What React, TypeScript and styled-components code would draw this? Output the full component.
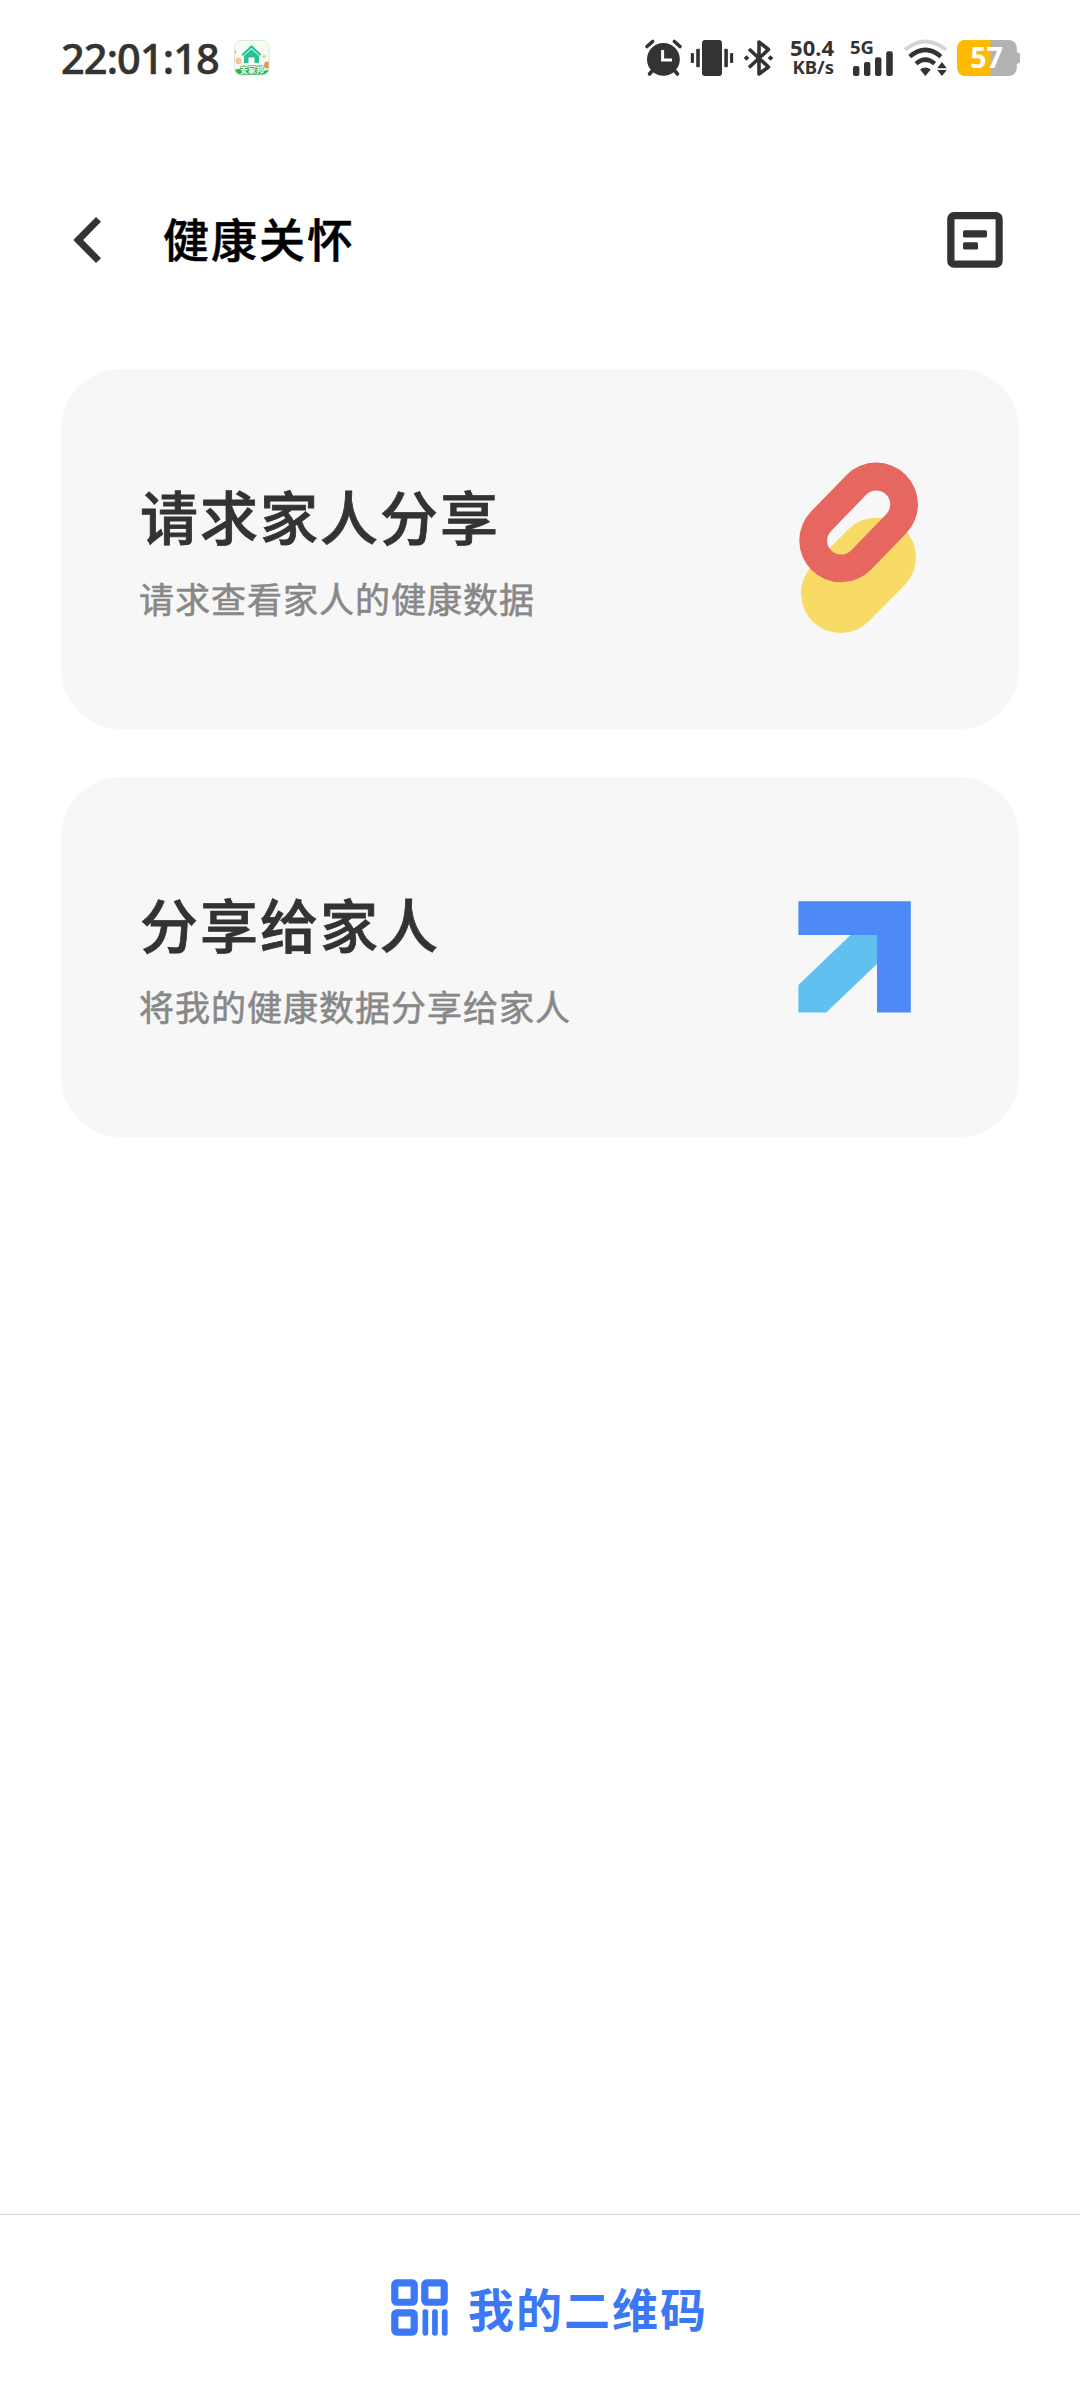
import React from "react";
import styled, { createGlobalStyle } from "styled-components";

const INK = "#333333";
const BLUE = "#3a78f5";

const GlobalStyle = createGlobalStyle`
  body { margin: 0; background: #ffffff; }
  * { box-sizing: border-box; }
`;

const Screen = styled.div`
  display: flex;
  flex-direction: column;
  width: 1080px;
  height: 2400px;
  overflow: hidden;
  background: #ffffff;
  font-family: "Noto Sans", "Noto Sans CJK SC", sans-serif;
`;

const Icon = styled.svg<{ $ml?: number }>`
  display: block;
  flex: none;
  overflow: visible;
  margin-left: ${(p) => p.$ml ?? 0}px;
`;

const StatusBar = styled.header`
  display: flex;
  align-items: center;
  height: 116px;
  padding: 0 59px 0 60px;
  color: ${INK};
`;

const Clock = styled.time`
  width: 174px;
  padding: 0 0 1px 1px;
  font-size: 41.5px;
  line-height: 60px;
  font-weight: 500;
  letter-spacing: -0.9px;
  white-space: nowrap;
  -webkit-text-stroke: 0.6px ${INK};
`;

const StatusIcons = styled.div`
  display: flex;
  align-items: center;
  margin-left: auto;
`;

const NetSpeed = styled.div`
  display: flex;
  flex-direction: column;
  align-items: flex-end;
  width: 47px;
  margin-left: 13px;
  margin-right: 1px;
  padding-bottom: 2px;
  font-weight: 700;
  white-space: nowrap;
`;

const SpeedValue = styled.span`
  font-size: 22px;
  line-height: 19px;
`;

const SpeedUnit = styled.span`
  font-size: 18.5px;
  line-height: 20px;
`;

const NavBar = styled.nav`
  display: flex;
  align-items: center;
  height: 248px;
  padding: 0 77px 0 73px;
`;

const PageTitle = styled.h1`
  flex: 1;
  margin: 0 0 2px 61px;
  font-size: 46px;
  line-height: 64px;
  font-weight: 500;
  letter-spacing: 2px;
  color: #000000;
  -webkit-text-stroke: 0.5px #000000;
`;

const CardList = styled.main`
  display: flex;
  flex: 1;
  flex-direction: column;
  gap: 48px;
  padding: 5px 61px 0;
`;

const Card = styled.section`
  display: flex;
  align-items: center;
  justify-content: space-between;
  height: 360px;
  padding: 0 98px 0 78px;
  border-radius: 60px;
  background: #f7f7f7;
`;

const CardText = styled.div`
  display: flex;
  flex-direction: column;
  gap: 17px;
  padding-top: 5px;
`;

const CardTitle = styled.h2`
  margin: 0 0 0 1px;
  font-size: 58px;
  line-height: 80px;
  font-weight: 500;
  letter-spacing: 2px;
  color: ${INK};
  -webkit-text-stroke: 0.8px ${INK};
`;

const CardHint = styled.p`
  margin: 0;
  font-size: 35px;
  line-height: 50px;
  font-weight: 400;
  letter-spacing: 1px;
  color: #888888;
  -webkit-text-stroke: 0.6px #888888;
`;

const BottomBar = styled.footer`
  display: flex;
  align-items: center;
  justify-content: center;
  gap: 20px;
  height: 186px;
  padding-left: 19px;
  border-top: 1px solid #d8d8d8;
`;

const BottomLabel = styled.span`
  padding-top: 2px;
  font-size: 46px;
  line-height: 64px;
  font-weight: 700;
  letter-spacing: 2px;
  color: ${BLUE};
`;

const AppBadge = () => (
  <Icon width="36" height="36" viewBox="0 0 36 36">
    <defs>
      <clipPath id="badge"><rect x="0.5" y="0.5" width="34.5" height="34.5" rx="7" /></clipPath>
    </defs>
    <g clipPath="url(#badge)">
      <rect width="36" height="36" fill="#f6fbf3" />
      <circle cx="4.5" cy="21" r="3.2" fill="#f8c493" />
      <circle cx="30" cy="16.5" r="1.8" fill="#f9c9a0" />
      <circle cx="33.5" cy="25" r="3.4" fill="#f0914a" />
      <circle cx="1" cy="12" r="1.4" fill="#f4a77b" />
      <path d="M0 30 Q8 27 18 30 T36 29 V36 H0Z" fill="#2fb653" />
      <path d="M17.5 5 L27.5 14.5 L26 16 L17.5 8 L9 16 L7.5 14.5Z" fill="#2dbf94" />
      <path d="M17.5 9.3 L25 16 V23 H20.5 V17.5 H14.5 V23 H10 V16Z" fill="#2dbf94" />
      <text x="18" y="33" textAnchor="middle" fontSize="8" fontWeight="700" fill="#ffffff" stroke="#2fa84f" strokeWidth="1.2" paintOrder="stroke" fontFamily="Noto Sans CJK SC, sans-serif">安家邦</text>
    </g>
    <rect x="0.5" y="0.5" width="34.5" height="34.5" rx="7" fill="none" stroke="#cfe3cc" strokeWidth="0.8" />
  </Icon>
);

const AlarmIcon = () => (
  <Icon width="37" height="38" viewBox="645 39 37 38">
    <circle cx="663.4" cy="59.3" r="16.4" fill={INK} />
    <path d="M647 46.5 L652.6 41.5 M680 46.5 L674.4 41.5" stroke={INK} strokeWidth="3.6" strokeLinecap="round" />
    <path d="M653 70 L649.5 74 M674 70 L677.5 74" stroke={INK} strokeWidth="3.6" strokeLinecap="round" />
    <path d="M662.6 50 V60 H672" fill="none" stroke="#ffffff" strokeWidth="3" />
  </Icon>
);

const VibrateIcon = () => (
  <Icon $ml={8} width="44" height="38" viewBox="690 39 44 38" fill={INK}>
    <rect x="702" y="40" width="20" height="36" rx="3.2" />
    <rect x="696.2" y="48.8" width="3.6" height="18.4" rx="1" />
    <rect x="724.3" y="48.8" width="3.6" height="18.4" rx="1" />
    <rect x="690.8" y="53" width="3.2" height="10" rx="1" />
    <rect x="730" y="53" width="3.2" height="10" rx="1" />
  </Icon>
);

const BluetoothIcon = () => (
  <Icon $ml={8} width="32" height="38" viewBox="742 39 32 38">
    <path d="M749 49 L768.5 67 L759 74 V42 L768.5 49.5 L749 67.5" fill="none" stroke={INK} strokeWidth="3.6" strokeLinejoin="round" />
    <path d="M746.5 55.2 L749.3 58 L746.5 60.8 L743.7 58Z M770.5 55.2 L773.3 58 L770.5 60.8 L767.7 58Z" fill={INK} />
  </Icon>
);

const SignalIcon = () => (
  <Icon $ml={15} width="44" height="38" viewBox="850 39 44 38" fill={INK}>
    <text x="850" y="53.7" fontSize="18.5" fontWeight="700">5G</text>
    <rect x="853" y="66" width="6.4" height="10" rx="2" />
    <rect x="864" y="62" width="6.4" height="14" rx="2" />
    <rect x="875" y="57.3" width="6.4" height="18.7" rx="2" />
    <rect x="886.2" y="51.3" width="6.6" height="24.7" rx="2.2" />
  </Icon>
);

const WifiIcon = () => (
  <Icon $ml={9} width="46" height="38" viewBox="903 39 46 38" fill="none">
    <path d="M905 49.8 Q925.3 33.2 946 49.8" stroke="#d4d4d4" strokeWidth="4" />
    <path d="M909.8 56.6 Q925.3 43.2 940.9 56.6" stroke={INK} strokeWidth="4.4" />
    <path d="M916 63.7 Q925.3 55.6 934.7 63.7" stroke={INK} strokeWidth="4.4" />
    <path d="M920 69.5 Q925.3 65.6 930.8 69.5 L925.4 76Z" fill={INK} />
    <path d="M942 62 L946.8 68.3 H937.2Z M942 76 L946.8 69.9 H937.2Z" fill={INK} />
  </Icon>
);

const BatteryIcon = () => (
  <Icon $ml={8} width="64" height="38" viewBox="957 39 64 38">
    <defs>
      <clipPath id="cell"><rect x="957.3" y="40" width="59.5" height="36" rx="8" /></clipPath>
    </defs>
    <path d="M1016 51.5 L1020 53.5 V62.5 L1016 64.5Z" fill="#b2b2b2" />
    <g clipPath="url(#cell)">
      <rect x="957" y="39" width="60" height="38" fill="#b2b2b2" />
      <rect x="957" y="39" width="33.5" height="38" fill="#ffba00" />
    </g>
    <text x="986.5" y="67.8" textAnchor="middle" fontSize="28.5" fontWeight="700" fill="#ffffff">57</text>
  </Icon>
);

const BackIcon = () => (
  <Icon width="29" height="48" viewBox="73 216 29 48">
    <path d="M98.5 219.4 L78.2 240 L98.5 260.6" fill="none" stroke={INK} strokeWidth="7" />
  </Icon>
);

const RecordsIcon = () => (
  <Icon width="56" height="56" viewBox="947 212 56 56" fill={INK}>
    <path fillRule="evenodd" d="M954 212 H996 A6.7 6.7 0 0 1 1002.7 218.7 V261 A6.7 6.7 0 0 1 996 267.7 H954 A6.7 6.7 0 0 1 947.2 261 V218.7 A6.7 6.7 0 0 1 954 212Z M954.5 219.3 V260.4 H995.6 V219.3Z" />
    <rect x="963" y="230.2" width="24" height="7.4" rx="1.5" />
    <rect x="963" y="242.2" width="15" height="7.4" rx="1.5" />
  </Icon>
);

const LinkIcon = () => (
  <Icon width="122" height="174" viewBox="799 462 122 174" strokeLinecap="round" fill="none">
    <path d="M840.7 593.3 L876.3 557.4" stroke="#f8da67" strokeWidth="79.4" />
    <path
      fill="#e6675f"
      fillRule="evenodd"
      d="M846.6 474.9 A41.7 41.7 0 0 1 905.8 533.8 L870.7 569.9 A41.7 41.7 0 0 1 811.3 511.3Z M866.4 494.6 A13.9 13.9 0 0 1 886.2 514.2 L851 550.4 A13.9 13.9 0 0 1 831.1 530.9Z"
    />
  </Icon>
);

const ArrowIcon = () => (
  <Icon width="123" height="112" viewBox="798 901 123 112">
    <path d="M850.6 935 H877.5 V963.5 L826.2 1012.5 H798.4 V985Z" fill="#60c1f0" />
    <path d="M798.4 901.2 H910.8 V1012.5 H877 V934.9 H798.4Z" fill="#4d8af8" />
  </Icon>
);

const QrIcon = () => (
  <Icon width="57" height="57" viewBox="391.5 2278.5 57 57" fill={BLUE}>
    {[[391.7, 2278.8], [421.7, 2278.8], [391.7, 2308.7]].map(([x, y]) => (
      <path
        key={`${x}-${y}`}
        fillRule="evenodd"
        transform={`translate(${x} ${y})`}
        d="M5.5 0 H21.1 A5.5 5.5 0 0 1 26.6 5.5 V21 A5.5 5.5 0 0 1 21.1 26.5 H5.5 A5.5 5.5 0 0 1 0 21 V5.5 A5.5 5.5 0 0 1 5.5 0Z M7.2 7.2 V19.4 H19.4 V7.2Z"
      />
    ))}
    {[423, 432.6, 442.4].map((x) => (
      <rect key={x} x={x} y="2308.7" width="5.7" height="26.5" rx="2.4" />
    ))}
  </Icon>
);

const cards = [
  { title: "请求家人分享", hint: "请求查看家人的健康数据", icon: <LinkIcon /> },
  { title: "分享给家人", hint: "将我的健康数据分享给家人", icon: <ArrowIcon /> },
];

export default function App() {
  return (
    <Screen>
      <GlobalStyle />
      <StatusBar>
        <Clock>22:01:18</Clock>
        <AppBadge />
        <StatusIcons>
          <AlarmIcon />
          <VibrateIcon />
          <BluetoothIcon />
          <NetSpeed>
            <SpeedValue>50.4</SpeedValue>
            <SpeedUnit>KB/s</SpeedUnit>
          </NetSpeed>
          <SignalIcon />
          <WifiIcon />
          <BatteryIcon />
        </StatusIcons>
      </StatusBar>
      <NavBar>
        <BackIcon />
        <PageTitle>健康关怀</PageTitle>
        <RecordsIcon />
      </NavBar>
      <CardList>
        {cards.map((c) => (
          <Card key={c.title}>
            <CardText>
              <CardTitle>{c.title}</CardTitle>
              <CardHint>{c.hint}</CardHint>
            </CardText>
            {c.icon}
          </Card>
        ))}
      </CardList>
      <BottomBar>
        <QrIcon />
        <BottomLabel>我的二维码</BottomLabel>
      </BottomBar>
    </Screen>
  );
}
